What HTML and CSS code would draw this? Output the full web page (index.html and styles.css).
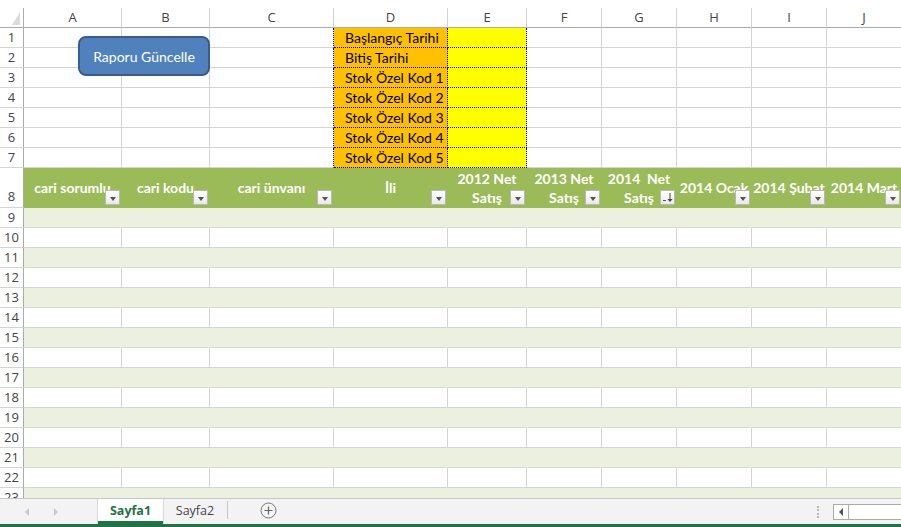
FILE: index.html
```html
<!DOCTYPE html>
<html lang="tr">
<head>
<meta charset="utf-8">
<title>Sayfa1</title>
<link rel="stylesheet" href="styles.css">
</head>
<body>
<div class="app">
  <div class="sheet">
    <div class="topgap"></div>
    <div class="row colhdr">
      <div class="corner"><svg width="8" height="13" viewBox="0 0 8 13"><polygon points="8,0 8,13 0,13" fill="#dcdcdc"/></svg></div>
      <div class="ch">A</div><div class="ch">B</div><div class="ch">C</div><div class="ch">D</div><div class="ch">E</div><div class="ch">F</div><div class="ch">G</div><div class="ch">H</div><div class="ch">I</div><div class="ch">J</div><div class="ch"></div>
    </div>

    <div class="row"><div class="rh">1</div><div class="c"></div><div class="c"></div><div class="c cl"></div><div class="c or">Başlangıç Tarihi</div><div class="c ye"></div><div class="c"></div><div class="c"></div><div class="c"></div><div class="c"></div><div class="c"></div><div class="c"></div></div>
    <div class="row"><div class="rh">2</div><div class="c"></div><div class="c"></div><div class="c cl"></div><div class="c or">Bitiş Tarihi</div><div class="c ye"></div><div class="c"></div><div class="c"></div><div class="c"></div><div class="c"></div><div class="c"></div><div class="c"></div></div>
    <div class="row"><div class="rh">3</div><div class="c"></div><div class="c"></div><div class="c cl"></div><div class="c or">Stok Özel Kod 1</div><div class="c ye"></div><div class="c"></div><div class="c"></div><div class="c"></div><div class="c"></div><div class="c"></div><div class="c"></div></div>
    <div class="row"><div class="rh">4</div><div class="c"></div><div class="c"></div><div class="c cl"></div><div class="c or">Stok Özel Kod 2</div><div class="c ye"></div><div class="c"></div><div class="c"></div><div class="c"></div><div class="c"></div><div class="c"></div><div class="c"></div></div>
    <div class="row"><div class="rh">5</div><div class="c"></div><div class="c"></div><div class="c cl"></div><div class="c or">Stok Özel Kod 3</div><div class="c ye"></div><div class="c"></div><div class="c"></div><div class="c"></div><div class="c"></div><div class="c"></div><div class="c"></div></div>
    <div class="row"><div class="rh">6</div><div class="c"></div><div class="c"></div><div class="c cl"></div><div class="c or">Stok Özel Kod 4</div><div class="c ye"></div><div class="c"></div><div class="c"></div><div class="c"></div><div class="c"></div><div class="c"></div><div class="c"></div></div>
    <div class="row"><div class="rh">7</div><div class="c"></div><div class="c"></div><div class="c cl"></div><div class="c or">Stok Özel Kod 5</div><div class="c ye"></div><div class="c"></div><div class="c"></div><div class="c"></div><div class="c"></div><div class="c"></div><div class="c"></div></div>

    <div class="row hdr">
      <div class="rh">8</div>
      <div class="c th">cari sorumlu<span class="fb"><i class="tri"></i></span></div>
      <div class="c th">cari kodu<span class="fb"><i class="tri"></i></span></div>
      <div class="c th">cari ünvanı<span class="fb"><i class="tri"></i></span></div>
      <div class="c th">İli<span class="fb"><i class="tri"></i></span></div>
      <div class="c th">2012 Net<br>Satış<span class="fb"><i class="tri"></i></span></div>
      <div class="c th">2013 Net<br>Satış<span class="fb"><i class="tri"></i></span></div>
      <div class="c th">2014&nbsp; Net<br>Satış<span class="fb"><svg width="13" height="13" viewBox="0 0 13 13"><rect x="2" y="9" width="3" height="1" fill="#555"/><path d="M9 2v8" stroke="#444" stroke-width="1"/><path d="M6.5 8h5L9 11z" fill="#444"/></svg></span></div>
      <div class="c th">2014 Ocak<span class="fb"><i class="tri"></i></span></div>
      <div class="c th">2014 Şubat<span class="fb"><i class="tri"></i></span></div>
      <div class="c th">2014 Mart<span class="fb"><i class="tri"></i></span></div>
      <div class="c th"></div>
    </div>

    <div class="row band"><div class="rh">9</div><div class="c"></div><div class="c"></div><div class="c"></div><div class="c"></div><div class="c"></div><div class="c"></div><div class="c"></div><div class="c"></div><div class="c"></div><div class="c"></div><div class="c"></div></div>
    <div class="row"><div class="rh">10</div><div class="c"></div><div class="c"></div><div class="c"></div><div class="c"></div><div class="c"></div><div class="c"></div><div class="c"></div><div class="c"></div><div class="c"></div><div class="c"></div><div class="c"></div></div>
    <div class="row band"><div class="rh">11</div><div class="c"></div><div class="c"></div><div class="c"></div><div class="c"></div><div class="c"></div><div class="c"></div><div class="c"></div><div class="c"></div><div class="c"></div><div class="c"></div><div class="c"></div></div>
    <div class="row"><div class="rh">12</div><div class="c"></div><div class="c"></div><div class="c"></div><div class="c"></div><div class="c"></div><div class="c"></div><div class="c"></div><div class="c"></div><div class="c"></div><div class="c"></div><div class="c"></div></div>
    <div class="row band"><div class="rh">13</div><div class="c"></div><div class="c"></div><div class="c"></div><div class="c"></div><div class="c"></div><div class="c"></div><div class="c"></div><div class="c"></div><div class="c"></div><div class="c"></div><div class="c"></div></div>
    <div class="row"><div class="rh">14</div><div class="c"></div><div class="c"></div><div class="c"></div><div class="c"></div><div class="c"></div><div class="c"></div><div class="c"></div><div class="c"></div><div class="c"></div><div class="c"></div><div class="c"></div></div>
    <div class="row band"><div class="rh">15</div><div class="c"></div><div class="c"></div><div class="c"></div><div class="c"></div><div class="c"></div><div class="c"></div><div class="c"></div><div class="c"></div><div class="c"></div><div class="c"></div><div class="c"></div></div>
    <div class="row"><div class="rh">16</div><div class="c"></div><div class="c"></div><div class="c"></div><div class="c"></div><div class="c"></div><div class="c"></div><div class="c"></div><div class="c"></div><div class="c"></div><div class="c"></div><div class="c"></div></div>
    <div class="row band"><div class="rh">17</div><div class="c"></div><div class="c"></div><div class="c"></div><div class="c"></div><div class="c"></div><div class="c"></div><div class="c"></div><div class="c"></div><div class="c"></div><div class="c"></div><div class="c"></div></div>
    <div class="row"><div class="rh">18</div><div class="c"></div><div class="c"></div><div class="c"></div><div class="c"></div><div class="c"></div><div class="c"></div><div class="c"></div><div class="c"></div><div class="c"></div><div class="c"></div><div class="c"></div></div>
    <div class="row band"><div class="rh">19</div><div class="c"></div><div class="c"></div><div class="c"></div><div class="c"></div><div class="c"></div><div class="c"></div><div class="c"></div><div class="c"></div><div class="c"></div><div class="c"></div><div class="c"></div></div>
    <div class="row"><div class="rh">20</div><div class="c"></div><div class="c"></div><div class="c"></div><div class="c"></div><div class="c"></div><div class="c"></div><div class="c"></div><div class="c"></div><div class="c"></div><div class="c"></div><div class="c"></div></div>
    <div class="row band"><div class="rh">21</div><div class="c"></div><div class="c"></div><div class="c"></div><div class="c"></div><div class="c"></div><div class="c"></div><div class="c"></div><div class="c"></div><div class="c"></div><div class="c"></div><div class="c"></div></div>
    <div class="row"><div class="rh">22</div><div class="c"></div><div class="c"></div><div class="c"></div><div class="c"></div><div class="c"></div><div class="c"></div><div class="c"></div><div class="c"></div><div class="c"></div><div class="c"></div><div class="c"></div></div>
    <div class="row band"><div class="rh">23</div><div class="c"></div><div class="c"></div><div class="c"></div><div class="c"></div><div class="c"></div><div class="c"></div><div class="c"></div><div class="c"></div><div class="c"></div><div class="c"></div><div class="c"></div></div>

    <div class="shape-btn">Raporu Güncelle</div>
  </div>

  <div class="tabbar">
    <div class="nav">
      <svg width="5" height="8" viewBox="0 0 5 8"><polygon points="4,0 4,8 0,4" fill="#c8c8c8"/></svg>
      <svg width="5" height="8" viewBox="0 0 5 8"><polygon points="1,0 1,8 5,4" fill="#c8c8c8"/></svg>
    </div>
    <div class="tab active">Sayfa1</div>
    <div class="tab">Sayfa2</div>
    <div class="sep"></div>
    <div class="add"><svg width="17" height="17" viewBox="0 0 17 17"><circle cx="8.5" cy="8.5" r="7.5" fill="none" stroke="#777" stroke-width="1"/><path d="M8.5 4.5v8M4.5 8.5h8" stroke="#666" stroke-width="1.2"/></svg></div>
    <div class="spacer"></div>
    <div class="grip"></div>
    <div class="hscroll">
      <div class="hbtn"><svg width="5" height="8" viewBox="0 0 5 8"><polygon points="4,0 4,8 0,4" fill="#555"/></svg></div>
      <div class="htrack"></div>
    </div>
  </div>
  <div class="statusline"></div>
</div>
</body>
</html>
```

FILE: styles.css
```css
* { box-sizing: border-box; }
html, body { margin: 0; padding: 0; background: #fff; }
body { width: 901px; height: 527px; overflow: hidden; font-family: "Lato", "Open Sans", sans-serif; }

.app { width: 901px; height: 527px; display: flex; flex-direction: column; }

.sheet { position: relative; height: 498px; overflow: hidden; background: #fff; }
.topgap { height: 8px; }

.row {
  display: grid;
  grid-template-columns: 24px 98px 88px 124px 114px 79px 75px 75px 75px 75px 75px 100px;
  height: 20px;
  width: 1000px;
}

.c {
  border-right: 1px solid #d4d4d4;
  border-bottom: 1px solid #d4d4d4;
  position: relative;
  font-size: 14px;
  line-height: 19px;
  white-space: nowrap;
}

.rh {
  border-right: 1px solid #ababab;
  border-bottom: 1px solid #d4d4d4;
  font-family: "Open Sans", sans-serif;
  font-size: 13px;
  color: #444;
  display: flex;
  align-items: flex-end;
  justify-content: center;
  line-height: 18px;
  padding-bottom: 1px;
}

.colhdr { height: 20px; }
.colhdr .corner {
  border-right: 1px solid #ababab;
  border-bottom: 1px solid #ababab;
  display: flex;
  align-items: flex-end;
  justify-content: flex-end;
  padding: 0 3px 2px 0;
}
.colhdr .ch {
  border-right: 1px solid #d4d4d4;
  border-bottom: 1px solid #ababab;
  font-family: "Open Sans", sans-serif;
  font-size: 13px;
  color: #444;
  text-align: center;
  line-height: 19px;
}

/* parameter cells */
.cl { border-right: 1px dotted #000; }
.or {
  background: #ffc000;
  border-right: 1px dotted #000;
  border-bottom: 1px dotted #000;
  padding-left: 11px;
  color: #000;
}
.ye {
  background: #ffff00;
  border-right: 1px dotted #000;
  border-bottom: 1px dotted #000;
}

/* table header */
.hdr { height: 40px; }
.hdr .rh { padding-bottom: 2px; }
.th {
  background: #9bbb59;
  border-right-color: #9bbb59;
  border-bottom-color: #9bbb59;
  color: #fff;
  font-weight: bold;
  font-size: 14px;
  line-height: 19px;
  display: flex;
  align-items: center;
  justify-content: center;
  text-align: center;
  overflow: hidden;
}

.fb {
  position: absolute;
  right: 1px;
  bottom: 2px;
  width: 15px;
  height: 15px;
  border: 1px solid #b8b8b8;
  background: linear-gradient(#ffffff, #e9e9e9);
  display: flex;
  align-items: center;
  justify-content: center;
}
.tri {
  display: block;
  width: 0;
  height: 0;
  border-left: 3.5px solid transparent;
  border-right: 3.5px solid transparent;
  border-top: 4px solid #555;
  margin-top: 2px;
}

/* banded rows */
.band .c {
  background: #ebf1de;
  border-right-color: #ebf1de;
  border-bottom-color: #d6dccb;
}

/* floating shape */
.shape-btn {
  position: absolute;
  left: 78px;
  top: 36px;
  width: 132px;
  height: 40px;
  border: 2px solid #385d8a;
  border-radius: 8px;
  background: #4f81bd;
  color: #fff;
  font-size: 14px;
  display: flex;
  align-items: center;
  justify-content: center;
}

/* tab bar */
.tabbar {
  height: 26px;
  border-top: 1px solid #c6c6c6;
  background: #f3f3f3;
  display: flex;
  align-items: stretch;
  font-family: "Open Sans", sans-serif;
  font-size: 12.5px;
}
.nav {
  width: 98px;
  display: flex;
  align-items: center;
  gap: 23px;
  padding-left: 25px;
}
.tab {
  width: 64px;
  display: flex;
  align-items: center;
  justify-content: center;
  color: #444;
  padding-bottom: 2px;
}
.tab.active {
  width: 65px;
  background: #fff;
  color: #217346;
  font-weight: bold;
  border-bottom: 3px solid #217346;
  padding-bottom: 0;
  box-shadow: 1px 0 0 #d8d8d8, -1px 0 0 #d8d8d8;
}
.sep { width: 1px; background: #c6c6c6; margin: 2px 0 5px; }
.add { margin-left: 32px; display: flex; align-items: center; padding-bottom: 2px; }
.spacer { flex: 1; }
.grip {
  width: 0;
  border-left: 2px dotted #b8b8b8;
  margin: 7px 14px 6px 0;
}
.hscroll {
  width: 68px;
  margin: 5px 0 4px;
  border: 1px solid #ababab;
  border-right: 0;
  background: #fff;
  display: flex;
}
.hbtn {
  width: 15px;
  border-right: 1px solid #ababab;
  display: flex;
  align-items: center;
  justify-content: center;
}
.htrack { flex: 1; }

.statusline { height: 3px; background: #217346; }
```
